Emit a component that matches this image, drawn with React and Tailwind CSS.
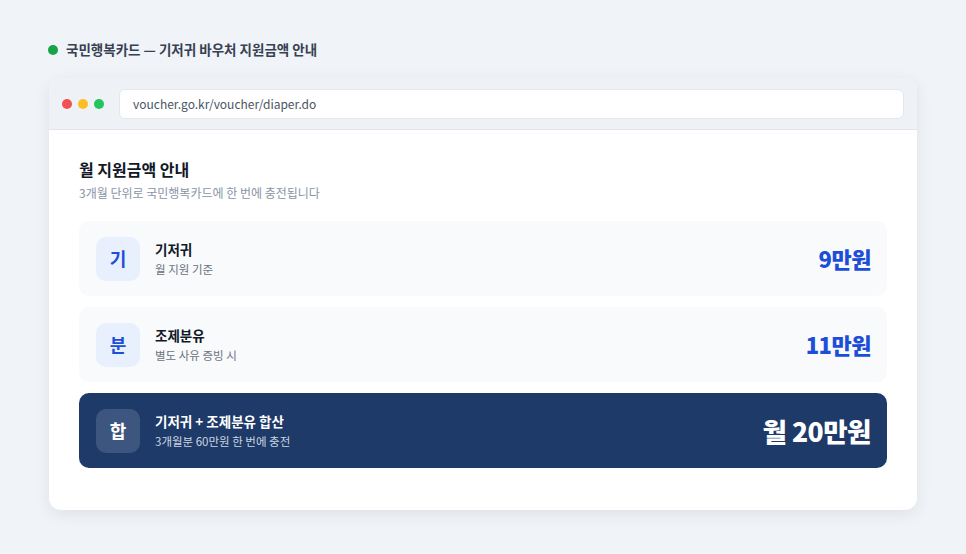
export default function App() {
  const font = { fontFamily: '"Noto Sans CJK KR", "Noto Sans", sans-serif' };
  return (
    <div className="w-[966px] h-[554px] bg-[#f0f3f7] pt-[40px] px-[49px]" style={font}>
      <div className="flex items-center gap-[8px] h-[20px] ml-[-1px]">
        <span className="w-[10px] h-[10px] rounded-full bg-[#16a34a]" />
        <span className="text-[13.5px] font-bold text-[#374151] leading-none">국민행복카드 — 기저귀 바우처 지원금액 안내</span>
      </div>
      <div className="mt-[18px] w-[868px] bg-white rounded-[12px] shadow-[0_4px_16px_rgba(15,23,42,0.08)] overflow-hidden">
        <div className="h-[52px] bg-[#eef1f5] border-b border-[#e2e6ec] flex items-center px-[13px]">
          <div className="flex gap-[6px]">
            <span className="w-[10px] h-[10px] rounded-full bg-[#ef5350]" />
            <span className="w-[10px] h-[10px] rounded-full bg-[#fbbf24]" />
            <span className="w-[10px] h-[10px] rounded-full bg-[#22c55e]" />
          </div>
          <div className="ml-[15px] flex-1 h-[30px] bg-white rounded-[6px] border border-[#e3e7ed] flex items-center px-[13px] text-[12px] text-[#4b5563]">
            voucher.go.kr/voucher/diaper.do
          </div>
        </div>
        <div className="px-[30px] pt-[28px] pb-[42px]">
          <div className="text-[16px] font-bold text-[#111827] leading-[22px]">월 지원금액 안내</div>
          <div className="mt-[4px] text-[12px] text-[#8a94a6] leading-[17px]">3개월 단위로 국민행복카드에 한 번에 충전됩니다</div>
          <div className="mt-[20px] flex flex-col gap-[11px]">
            <div className="h-[75px] rounded-[10px] bg-[#f8fafc] flex items-center pl-[17px] pr-[16px]">
              <div className="w-[44px] h-[44px] rounded-[10px] bg-[#e8f0fe] flex items-center justify-center text-[18px] font-bold text-[#1d4ed8]">기</div>
              <div className="ml-[15px] flex-1">
                <div className="text-[13.5px] font-bold text-[#111827] leading-[18px]">기저귀</div>
                <div className="mt-[4px] text-[11.5px] text-[#6b7280] leading-[15px]">월 지원 기준</div>
              </div>
              <div className="text-[22px] font-extrabold text-[#1d4ed8] tracking-[-0.5px]">9만원</div>
            </div>
            <div className="h-[75px] rounded-[10px] bg-[#f8fafc] flex items-center pl-[17px] pr-[16px]">
              <div className="w-[44px] h-[44px] rounded-[10px] bg-[#e8f0fe] flex items-center justify-center text-[18px] font-bold text-[#1d4ed8]">분</div>
              <div className="ml-[15px] flex-1">
                <div className="text-[13.5px] font-bold text-[#111827] leading-[18px]">조제분유</div>
                <div className="mt-[4px] text-[11.5px] text-[#6b7280] leading-[15px]">별도 사유 증빙 시</div>
              </div>
              <div className="text-[22px] font-extrabold text-[#1d4ed8] tracking-[-0.5px]">11만원</div>
            </div>
            <div className="h-[75px] rounded-[10px] bg-[#1e3a68] flex items-center pl-[17px] pr-[16px]">
              <div className="w-[44px] h-[44px] rounded-[10px] bg-[#3d5680] flex items-center justify-center text-[18px] font-bold text-white">합</div>
              <div className="ml-[15px] flex-1">
                <div className="text-[13.5px] font-bold text-white leading-[18px]">기저귀 + 조제분유 합산</div>
                <div className="mt-[4px] text-[11.5px] text-[#cbd5e1] leading-[15px]">3개월분 60만원 한 번에 충전</div>
              </div>
              <div className="text-[26.5px] font-extrabold text-white tracking-[-0.5px]">월 20만원</div>
            </div>
          </div>
        </div>
      </div>
    </div>
  );
}
